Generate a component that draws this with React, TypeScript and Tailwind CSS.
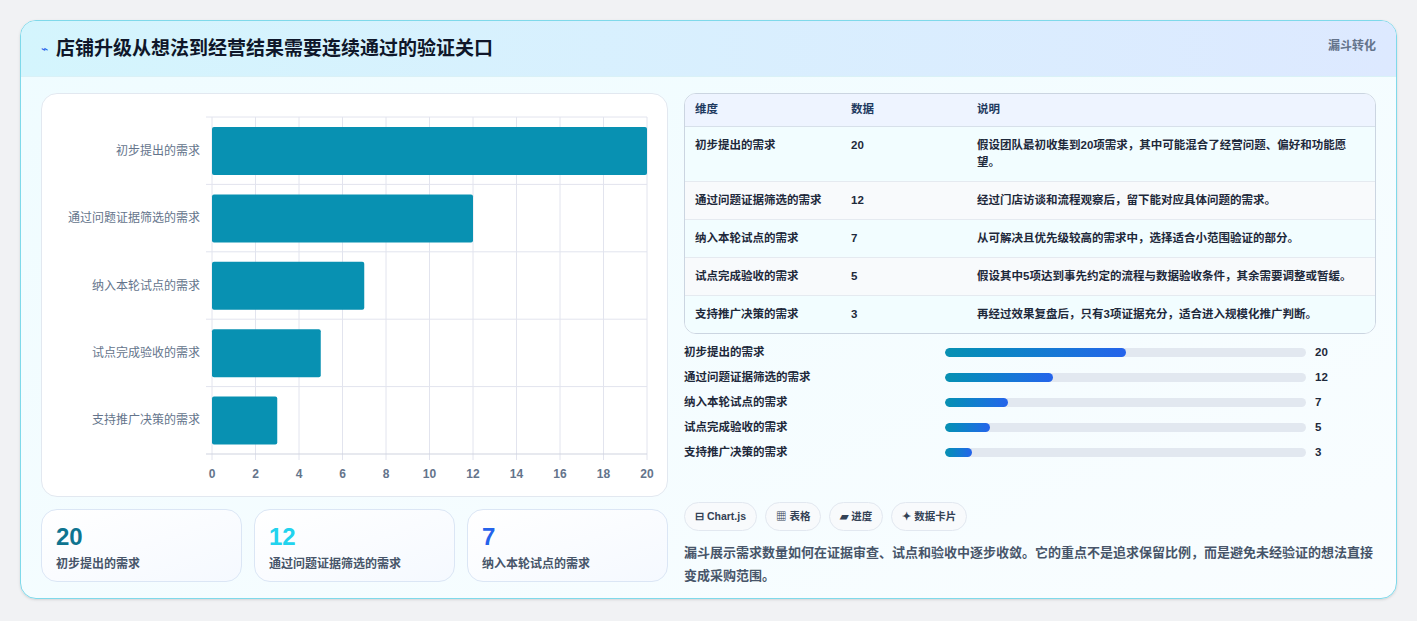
const rows = [
  { name: "初步提出的需求", v: 20, note: "假设团队最初收集到20项需求，其中可能混合了经营问题、偏好和功能愿望。" },
  { name: "通过问题证据筛选的需求", v: 12, note: "经过门店访谈和流程观察后，留下能对应具体问题的需求。" },
  { name: "纳入本轮试点的需求", v: 7, note: "从可解决且优先级较高的需求中，选择适合小范围验证的部分。" },
  { name: "试点完成验收的需求", v: 5, note: "假设其中5项达到事先约定的流程与数据验收条件，其余需要调整或暂缓。" },
  { name: "支持推广决策的需求", v: 3, note: "再经过效果复盘后，只有3项证据充分，适合进入规模化推广判断。" },
]

function Chart() {
  const x0 = 170, w = 435, y0 = 23, h = 337, rh = h / 5
  return (
    <svg width="627" height="404" className="block">
      {Array.from({ length: 11 }).map((_, i) => (
        <line key={i} x1={x0 + (w * i) / 10} x2={x0 + (w * i) / 10} y1={y0} y2={y0 + h + 6} stroke="#e2e4ee" />
      ))}
      {Array.from({ length: 6 }).map((_, i) => (
        <line key={i} x1={x0 - 6} x2={x0 + w} y1={y0 + rh * i} y2={y0 + rh * i} stroke={i === 5 ? "#cfd3df" : "#e2e4ee"} />
      ))}
      {rows.map((r, i) => (
        <g key={i}>
          <rect x={x0} y={y0 + rh * i + 10} width={(w * r.v) / 20} height={48} rx={2} fill="#0891b2" />
          <text x={x0 - 12} y={y0 + rh * i + rh / 2 + 4} textAnchor="end" fontSize="12" fill="#64748b">{r.name}</text>
        </g>
      ))}
      {Array.from({ length: 11 }).map((_, i) => (
        <text key={i} x={x0 + (w * i) / 10} y={y0 + h + 24} textAnchor="middle" fontSize="12" fontWeight="bold" fill="#64748b">{i * 2}</text>
      ))}
    </svg>
  )
}

export default function App() {
  return (
    <div className="min-h-[621px] bg-[#f1f2f4] pt-5 pl-5" style={{ fontFamily: '"Liberation Sans", "Noto Sans CJK SC", sans-serif' }}>
      <div className="w-[1377px] h-[579px] rounded-2xl border border-[#7fd9ea] bg-gradient-to-br from-[#effcff] to-[#f9fdff] overflow-hidden shadow-sm">
        <div className="h-[56px] flex items-start justify-between px-5 bg-gradient-to-r from-[#d4f5fd] to-[#dde9ff] border-b border-[#d9f1f7]">
          <div className="flex items-center gap-2 pt-[14px]">
            <span className="text-[#2563eb] text-xs">⌁</span>
            <h1 className="text-[19px] font-bold text-[#0f172a]">店铺升级从想法到经营结果需要连续通过的验证关口</h1>
          </div>
          <div className="pt-[16px] text-[12px] font-bold text-[#64748b]">漏斗转化</div>
        </div>
        <div className="flex gap-4 px-5 pt-4">
          <div className="w-[627px] flex flex-col gap-3">
            <div className="h-[404px] rounded-2xl border border-[#e2e8f0] bg-white"><Chart /></div>
            <div className="grid grid-cols-3 gap-3">
              {[
                ["20", "text-[#0e7490]", rows[0].name],
                ["12", "text-[#22d3ee]", rows[1].name],
                ["7", "text-[#2563eb]", rows[2].name],
              ].map(([n, c, l]) => (
                <div key={n} className="h-[73px] rounded-2xl border border-[#dbe6f5] bg-gradient-to-br from-white to-[#f5f9ff] px-[14px] pt-[13px]">
                  <div className={`text-[24px] font-bold leading-7 ${c}`}>{n}</div>
                  <div className="text-[12px] font-bold text-[#475569] mt-1">{l}</div>
                </div>
              ))}
            </div>
          </div>
          <div className="w-[695px] flex flex-col">
            <div className="rounded-xl border border-[#cbd5e1] overflow-hidden bg-white text-[11.5px] font-bold text-[#1e293b]">
              <div className="flex h-[33px] items-center bg-[#eef4ff] text-[#1e3a5f] border-b border-[#d7e0ea]">
                <div className="w-[166px] pl-[10px]">维度</div>
                <div className="w-[126px]">数据</div>
                <div className="flex-1">说明</div>
              </div>
              {rows.map((r, i) => (
                <div key={i} className={`flex py-[10px] leading-[17px] border-b border-[#e5eaf0] last:border-b-0 ${i % 2 ? "bg-[#f8fafc]" : "bg-[#f2fdff]"}`}>
                  <div className="w-[166px] pl-[10px]">{r.name}</div>
                  <div className="w-[126px]">{r.v}</div>
                  <div className="flex-1 pr-4">{r.note}</div>
                </div>
              ))}
            </div>
            <div className="mt-[11px] flex flex-col gap-[10px]">
              {rows.map((r, i) => (
                <div key={i} className="flex items-center h-[15px] text-[11.5px] font-bold text-[#1e293b]">
                  <div className="w-[261px]">{r.name}</div>
                  <div className="w-[361px] h-[9px] rounded-full bg-[#e2e8f0] overflow-hidden">
                    <div className="h-full rounded-full bg-gradient-to-r from-[#0891b2] to-[#2563eb]" style={{ width: `${r.v * 2.5}%` }} />
                  </div>
                  <div className="pl-[9px]">{r.v}</div>
                </div>
              ))}
            </div>
            <div className="mt-[42px] flex gap-2">
              {["⊟ Chart.js", "▦ 表格", "▰ 进度", "✦ 数据卡片"].map((t) => (
                <span key={t} className="h-[29px] flex items-center px-[10px] rounded-full border border-[#e2e8f0] bg-[#f8fafc] text-[10.5px] font-bold text-[#334155]">{t}</span>
              ))}
            </div>
            <p className="mt-[10px] text-[13px] leading-[23px] font-bold text-[#475569]">漏斗展示需求数量如何在证据审查、试点和验收中逐步收敛。它的重点不是追求保留比例，而是避免未经验证的想法直接变成采购范围。</p>
          </div>
        </div>
      </div>
    </div>
  )
}
